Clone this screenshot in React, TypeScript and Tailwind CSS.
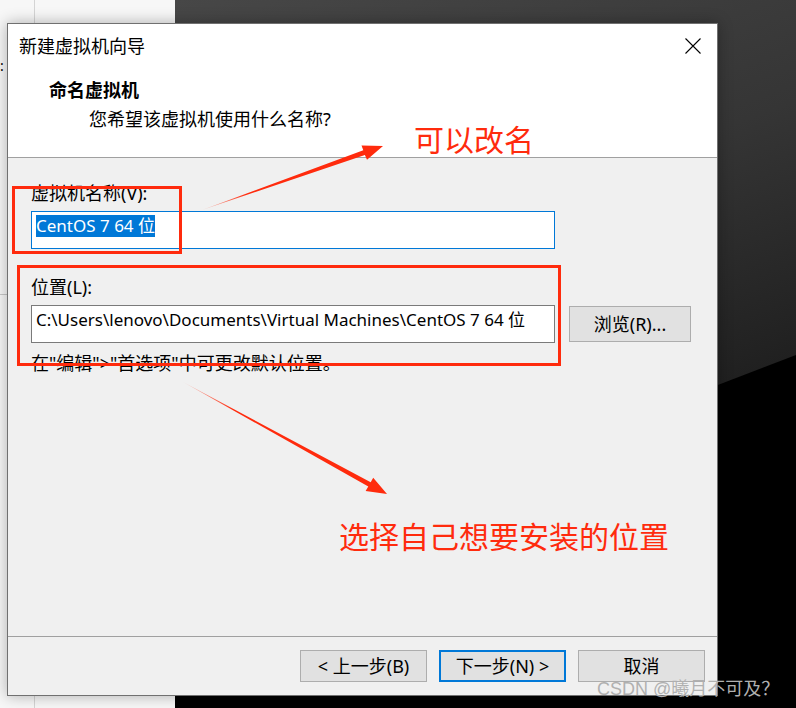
import React from 'react';

const RED = '#ff2b0d';

function Button({ label, primary }: { label: string; primary?: boolean }) {
  return (
    <div
      className={
        'h-[32px] flex items-center justify-center bg-[#e1e1e1] text-[18px] text-black ' +
        (primary ? 'w-[127px] border-2 border-[#0078d7]' : 'w-[127px] border border-[#adadad]')
      }
    >
      {label}
    </div>
  );
}

function Wizard() {
  return (
    <div className="absolute left-[7px] top-[23px] w-[711px] h-[673px] flex flex-col border border-[#707070] bg-[#f0f0f0] shadow-[0_0_14px_rgba(0,0,0,0.3)] font-['Noto_Sans','Noto_Sans_CJK_SC',sans-serif] text-black">
      <div className="relative h-[134px] bg-white border-b border-[#a0a0a0]">
        <div className="h-[45px] flex items-center pl-[11px] text-[18px]">新建虚拟机向导</div>
        <svg className="absolute right-[16px] top-[14px]" width="16" height="16" viewBox="0 0 16 16">
          <path d="M0.5 0.5 L15.5 15.5 M15.5 0.5 L0.5 15.5" stroke="#000" strokeWidth="1.1" />
        </svg>
        <div className="pt-[8px] pl-[41px] text-[18px] leading-[26px] font-bold">命名虚拟机</div>
        <div className="mt-[3px] pl-[81px] text-[18px] leading-[26px]">您希望该虚拟机使用什么名称?</div>
      </div>

      <div className="flex-1 px-[23px] pt-[23px] text-[18px]">
        <div className="leading-[24px]">虚拟机名称(V):</div>
        <div className="mt-[6px] w-[524px] h-[38px] bg-white border border-[#0078d7] pl-[4px] pt-[1px] text-[17px]">
          <span className="inline-block leading-[22px] bg-[#0078d7] text-white">CentOS 7 64 位</span>
        </div>

        <div className="mt-[26px] leading-[24px]">位置(L):</div>
        <div className="mt-[6px] flex items-center gap-[14px]">
          <div className="w-[524px] h-[38px] bg-white border border-[#7a7a7a] pl-[4px] pt-[3px] text-[17px] leading-[22px] whitespace-nowrap overflow-hidden">
            C:\Users\lenovo\Documents\Virtual Machines\CentOS 7 64 位
          </div>
          <div className="w-[122px] h-[36px] flex items-center justify-center bg-[#e1e1e1] border border-[#adadad]">
            浏览(R)...
          </div>
        </div>
        <div className="mt-[8px] leading-[24px]">在"编辑"&gt;"首选项"中可更改默认位置。</div>
      </div>

      <div className="h-[59px] border-t border-[#a0a0a0] flex justify-end gap-[12px] pt-[13px] pr-[12px]">
        <Button label="< 上一步(B)" />
        <Button label="下一步(N) >" primary />
        <Button label="取消" />
      </div>
    </div>
  );
}

function Annotations() {
  return (
    <>
      <div className="absolute left-[12px] top-[186px] w-[170px] h-[68px] border-[3px] border-[#ff2b0d]" />
      <div className="absolute left-[17px] top-[265px] w-[544px] h-[101px] border-[3px] border-[#ff2b0d]" />
      <svg className="absolute inset-0 pointer-events-none" width="796" height="708">
        <defs>
          <linearGradient id="a1" x1="202" y1="210" x2="383" y2="146" gradientUnits="userSpaceOnUse">
            <stop offset="0" stopColor={RED} stopOpacity="0.2" />
            <stop offset="0.25" stopColor={RED} />
          </linearGradient>
          <linearGradient id="a2" x1="183" y1="382" x2="387" y2="494" gradientUnits="userSpaceOnUse">
            <stop offset="0" stopColor={RED} stopOpacity="0.2" />
            <stop offset="0.25" stopColor={RED} />
          </linearGradient>
        </defs>
        <polygon
          points="202,210 364.9,155.1 367,159.8 383,146 361.5,145.5 363.3,150.3"
          fill="url(#a1)"
        />
        <polygon
          points="183,382 370.7,482.2 373.2,477.8 387,494 365.6,491 368.3,486.6"
          fill="url(#a2)"
        />
      </svg>
      <div className="absolute left-[414px] top-[122px] text-[30px] leading-[32px] text-[#ff2b0d] font-['Noto_Sans_CJK_SC',sans-serif]">
        可以改名
      </div>
      <div className="absolute left-[339px] top-[519px] text-[30px] leading-[32px] text-[#ff2b0d] font-['Noto_Sans_CJK_SC',sans-serif]">
        选择自己想要安装的位置
      </div>
      <div className="absolute left-[597px] top-[677px] text-[18px] leading-[24px] text-[#b0b0b0] font-['Liberation_Sans','Noto_Sans_CJK_SC',sans-serif] whitespace-nowrap">
        CSDN @曦月不可及？
      </div>
    </>
  );
}

export default function App() {
  return (
    <div className="relative w-[796px] h-[708px] overflow-hidden flex">
      <div className="relative w-[175px] h-full bg-[#f7f7f7]">
        <div className="absolute left-[34px] top-0 h-full w-px bg-[#d4d4d4]" />
        <div className="absolute left-0 top-[294px] w-[8px] h-px bg-[#c8c8c8]" />
        <div className="absolute left-0 top-[58px] text-[14px] leading-[16px] text-black">:</div>
      </div>
      <div className="relative flex-1 h-full bg-[linear-gradient(160deg,#474747_0%,#353535_35%,#222_60%,#000_100%)]">
        <svg className="absolute inset-0" width="621" height="708">
          <polygon points="0,594 621,355 621,708 0,708" fill="#000" />
        </svg>
      </div>
      <Wizard />
      <Annotations />
    </div>
  );
}
